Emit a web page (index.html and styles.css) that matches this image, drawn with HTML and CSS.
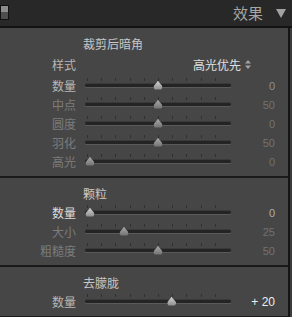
FILE: index.html
```html
<!DOCTYPE html>
<html lang="zh-CN">
  <head>
    <meta charset="UTF-8" />
    <title>效果</title>
    <link rel="stylesheet" href="styles.css">
  </head>
  <body>
    <header class="panel-header">
      <span class="toggle"></span>
      <h2>效果</h2>
      <span class="collapse"></span>
    </header>

    <section class="group">
      <h3>裁剪后暗角</h3>
      <div class="row row-select">
        <label>样式</label>
        <span class="select">高光优先
          <svg class="arrows" width="6" height="9" viewBox="0 0 6 9">
            <path d="M3 0 L6 3.5 H0 Z M0 5.5 H6 L3 9 Z" fill="#a4a4a4" />
          </svg>
        </span>
      </div>
      <div class="row">
        <label>数量</label>
        <div class="slider"><i style="--p: 0.5"></i></div>
        <span class="value">0</span>
      </div>
      <div class="row dim">
        <label>中点</label>
        <div class="slider"><i style="--p: 0.5"></i></div>
        <span class="value">50</span>
      </div>
      <div class="row dim">
        <label>圆度</label>
        <div class="slider"><i style="--p: 0.5"></i></div>
        <span class="value">0</span>
      </div>
      <div class="row dim">
        <label>羽化</label>
        <div class="slider"><i style="--p: 0.5"></i></div>
        <span class="value">50</span>
      </div>
      <div class="row dim">
        <label>高光</label>
        <div class="slider"><i style="--p: 0"></i></div>
        <span class="value">0</span>
      </div>
    </section>

    <section class="group">
      <h3>颗粒</h3>
      <div class="row bright">
        <label>数量</label>
        <div class="slider"><i style="--p: 0"></i></div>
        <span class="value">0</span>
      </div>
      <div class="row dim">
        <label>大小</label>
        <div class="slider"><i style="--p: 0.25"></i></div>
        <span class="value">25</span>
      </div>
      <div class="row dim">
        <label>粗糙度</label>
        <div class="slider"><i style="--p: 0.5"></i></div>
        <span class="value">50</span>
      </div>
    </section>

    <section class="group">
      <h3>去朦胧</h3>
      <div class="row active">
        <label>数量</label>
        <div class="slider"><i style="--p: 0.6"></i></div>
        <span class="value">+ 20</span>
      </div>
    </section>
  </body>
</html>
```

FILE: styles.css
```css
* {
  box-sizing: border-box;
  margin: 0;
  padding: 0;
}

body {
  background-color: #3b3b3b;
  font-family: "Noto Sans CJK SC", "Liberation Sans", sans-serif;
  width: 292px;
  height: 317px;
  overflow: hidden;
}

.panel-header {
  height: 28px;
  background-color: #282828;
  border-bottom: 2px solid #121212;
  display: flex;
  align-items: center;
  position: relative;
}

.toggle {
  position: absolute;
  left: 0;
  top: 5px;
  width: 9px;
  height: 15px;
  border: 1px solid #111;
  background: linear-gradient(#8c8c8c 0 50%, #4e4e4e 50% 100%);
}

.panel-header h2 {
  margin-left: auto;
  margin-right: 13px;
  font-size: 15px;
  font-weight: normal;
  color: #a6a6a6;
  line-height: 1;
  margin-top: -1px;
}

.collapse {
  width: 0;
  height: 0;
  border-left: 5px solid transparent;
  border-right: 5px solid transparent;
  border-top: 9px solid #a2a2a2;
  margin-right: 6px;
}

.group {
  width: 290px;
  background-color: #464646;
  border-right: 2px solid #151515;
  border-bottom: 2px solid #1a1a1a;
  padding: 6px 0 5px;
}

.group h3 {
  height: 19px;
  line-height: 19px;
  padding-left: 83px;
  font-size: 12px;
  font-weight: normal;
  color: #c6c6c6;
}

.row {
  display: grid;
  grid-template-columns: 76px 146px 35px;
  column-gap: 9px;
  align-items: center;
  height: 19px;
  font-size: 12px;
}

.row label {
  text-align: right;
  color: #b6b6b6;
}

.row-select {
  height: 23px;
}

.select {
  grid-column: 2 / 4;
  display: flex;
  justify-content: flex-end;
  align-items: center;
  gap: 4px;
  padding-right: 24px;
  color: #e0e0e0;
}

.slider {
  position: relative;
  height: 3px;
  background-color: #242424;
  border-radius: 2px;
  box-shadow: 0 1px 0 #5a5a5a, 0 -1px 0 #3a3a3a;
}

.slider::before {
  content: "";
  position: absolute;
  left: 2px;
  right: 2px;
  top: -6px;
  height: 3px;
  background: repeating-linear-gradient(to right, #303030 0 1px, transparent 1px 14.2px);
}

.slider i {
  position: absolute;
  top: 50%;
  left: calc(5px + (100% - 10px) * var(--p));
  width: 9px;
  height: 9px;
  transform: translate(-50%, -55%);
  background: linear-gradient(#d2d2d2, #8a8a8a);
  clip-path: polygon(50% 0, 62% 20%, 100% 62%, 100% 80%, 85% 100%, 15% 100%, 0 80%, 0 62%, 38% 20%);
}

.value {
  text-align: right;
  font-family: "Liberation Sans", sans-serif;
  font-size: 11px;
  color: #8e8e8e;
}

.dim label {
  color: #7c7c7c;
}

.dim .value {
  color: #727272;
}

.dim .slider i {
  background: linear-gradient(#a8a8a8, #707070);
}

.bright label {
  color: #dcdcdc;
}

.bright .value {
  color: #acacac;
}

.active .value {
  color: #ededed;
  font-size: 12px;
}
```
